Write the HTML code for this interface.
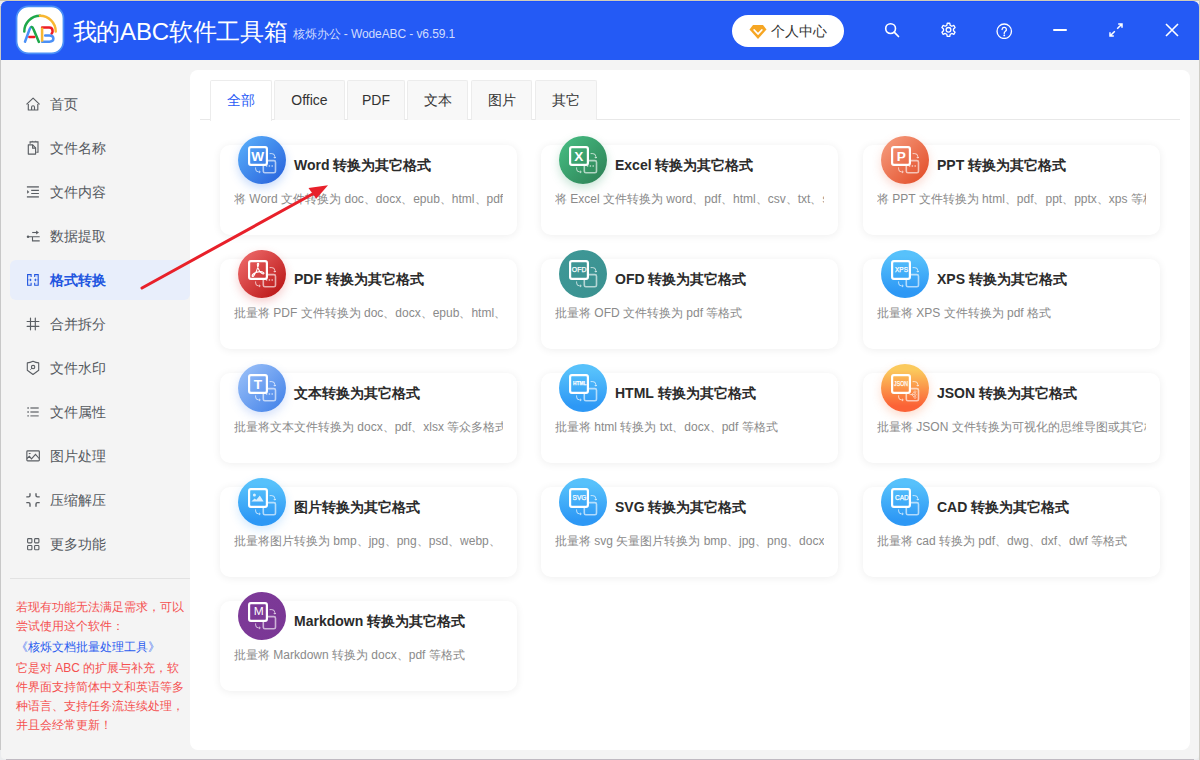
<!DOCTYPE html>
<html><head><meta charset="utf-8"><style>*{box-sizing:border-box;margin:0;padding:0}
html,body{width:1200px;height:760px;overflow:hidden;background:#ebecee;font-family:"Liberation Sans",sans-serif;position:relative}
#win{position:absolute;left:1px;top:1px;width:1198px;height:758px;background:#f4f4f4;border-radius:6px 6px 4px 4px}
#lcol{position:absolute;left:0;top:6px;width:1px;height:744px;background:#c8c8c8}
#rcol{position:absolute;left:1199px;top:0;width:1px;height:760px;background:#cfcdc6}
#brow{position:absolute;left:6px;top:759px;width:1188px;height:1px;background:#c0bac2}
#bar{position:absolute;left:1px;top:1px;width:1198px;height:59px;background:#245af5;border-top:1px solid #1a50ff;border-radius:6px 6px 0 0}
#logo{position:absolute;left:14px;top:4px}
#title{position:absolute;left:72.5px;top:16px;letter-spacing:-0.2px;font-size:24px;color:#fff;line-height:32px;white-space:nowrap}
#sub{position:absolute;left:293px;top:26px;letter-spacing:-0.1px;font-size:12px;color:#d0dcfd;line-height:16px;white-space:nowrap}
#user{position:absolute;left:732px;top:15px;width:112px;height:32px;border-radius:16px;background:#fff;font-size:14px;color:#333;line-height:33px;padding-left:39px}
.tb{position:absolute}
.mi{position:absolute;left:10px;width:180px;height:40px;font-size:14px;color:#55595f;line-height:40px;padding-left:40px;border-radius:6px;white-space:nowrap}
.mi svg{position:absolute;left:15px;top:12px;width:16px;height:16px;color:#5a5e63}
.mi.act{background:#e8eefb;color:#2256e0;font-weight:bold}
.mi.act svg{color:#2256e0}
#sep{position:absolute;left:10px;top:578px;width:180px;height:1px;background:#e2e2e2}
#note{position:absolute;left:16px;top:598px;width:172px;font-size:12px;line-height:18.75px;color:#f45050}
#note .lk{display:block;line-height:23.75px;color:#2a5cf0}
#main{position:absolute;left:190px;top:70px;width:1000px;height:680px;background:#fff;border-radius:8px}
#tabline{position:absolute;left:200px;top:119px;width:980px;height:1px;background:#e8e8e8}
.tab{position:absolute;top:80px;height:40px;border:1px solid #ececec;border-bottom:none;background:#f8f8f8;font-size:14px;color:#333;line-height:38px;text-align:center;border-radius:2px 2px 0 0}
.tab.act{background:#fff;color:#2a5bf6;height:41px}
.card{position:absolute;width:297px;height:90px;background:#fff;border-radius:10px;box-shadow:0 1px 8px rgba(0,0,0,0.07)}
.icw{position:absolute;left:18px;top:-9px;width:48px;height:48px;border-radius:50%}
.ic{position:absolute;left:18px;top:-9px;width:48px;height:48px}
.ct{position:absolute;left:74px;top:10px;font-size:14px;font-weight:bold;color:#2b2b2b;white-space:nowrap;line-height:20px}
.cd{position:absolute;left:14px;top:44.5px;width:269px;font-size:12px;color:#8a8a8a;white-space:nowrap;overflow:hidden;line-height:18px}
#edge{position:absolute;left:0;top:0;width:1200px;height:1px;background:#d0ccb8}
</style></head><body>
<div id="edge"></div><div id="lcol"></div><div id="rcol"></div><div id="brow"></div><div id="win"></div>
<div id="bar"></div>
<svg id="logo" width="52" height="52" viewBox="0 0 52 52">
<rect x="2.55" y="2.35" width="46.9" height="47" rx="12" fill="#fff" stroke="#4a90f8" stroke-width="1.7"/>
<path d="M10.3 27.4A15.7 15.7 0 0 1 26 11.7" fill="none" stroke="#1ea84a" stroke-width="2.5" stroke-linecap="round"/>
<path d="M26 11.7A15.7 15.7 0 0 1 41.7 27.4" fill="none" stroke="#f8b731" stroke-width="2.5" stroke-linecap="round"/>
<path d="M11 37.7L15.6 25.2Q16.5 23 17.6 23" fill="none" stroke="#4a8ff6" stroke-width="2.5" stroke-linecap="round"/>
<path d="M17.6 23Q18.7 23 19.5 25.2L24.9 37.9" fill="none" stroke="#1ea84a" stroke-width="2.5" stroke-linecap="round"/>
<path d="M15.4 32.9H20.2" stroke="#ee1c24" stroke-width="2.5" stroke-linecap="round"/>
<path d="M28.1 23.6H35.2Q38.6 23.6 38.6 27.2Q38.6 28.6 37.6 29.6" fill="none" stroke="#ee1c24" stroke-width="2.5" stroke-linecap="round"/>
<path d="M31.2 31.5H35.4Q39.4 31.5 39.4 34.6Q39.4 37.7 35.4 37.7H28.1" fill="none" stroke="#4a8ff6" stroke-width="2.5" stroke-linecap="round"/>
<path d="M28.1 23.6V37.7" stroke="#f8b731" stroke-width="2.5"/>
</svg>
<div id="title">我的ABC软件工具箱</div>
<div id="sub">核烁办公 - WodeABC - v6.59.1</div>
<div id="user"><svg viewBox="0 0 18 16" width="18" height="16" style="position:absolute;left:17px;top:9px"><path d="M4 1h10l3.5 4.5L9 15 .5 5.5z" fill="#f6a623"/><path d="M5.2 6l3.8 4 3.8-4" fill="none" stroke="#fff" stroke-width="1.8" stroke-linecap="round" stroke-linejoin="round"/></svg>个人中心</div>
<svg class="tb" style="left:884px;top:22px" viewBox="0 0 16 16" width="16" height="16"><circle cx="6.6" cy="6.6" r="4.9" fill="none" stroke="#fff" stroke-width="1.6"/><path d="M10.2 10.2l4.3 4.3" stroke="#fff" stroke-width="1.7" stroke-linecap="round"/></svg>
<svg class="tb" style="left:939.5px;top:22px" viewBox="0 0 16 16" width="17" height="17"><path d="M6.8 1.2h2.4l.4 2 1.5.8 1.9-.8 1.2 2-1.5 1.4v1.6l1.5 1.4-1.2 2-1.9-.8-1.5.8-.4 2H6.8l-.4-2-1.5-.8-1.9.8-1.2-2 1.5-1.4V6.6L1.8 5.2l1.2-2 1.9.8 1.5-.8z" fill="none" stroke="#fff" stroke-width="1.25" stroke-linejoin="round"/><circle cx="8" cy="7.4" r="2.2" fill="none" stroke="#fff" stroke-width="1.25"/></svg>
<svg class="tb" style="left:996px;top:22.5px" viewBox="0 0 16 16" width="16.5" height="16.5"><circle cx="8" cy="8" r="7" fill="none" stroke="#fff" stroke-width="1.3"/><path d="M5.9 6.3a2.1 2.1 0 1 1 3 1.9c-.6.4-.9.8-.9 1.4v.6" fill="none" stroke="#fff" stroke-width="1.25" stroke-linecap="round"/><circle cx="8" cy="12" r="0.9" fill="#fff"/></svg>
<div style="position:absolute;left:1053px;top:29px;width:14px;height:2px;background:#fff;border-radius:1px"></div>
<svg class="tb" style="left:1108px;top:22px" viewBox="0 0 16 16" width="16" height="16"><path d="M9.2 6.8l4.8-4.8M10.2 2h3.8v3.8M6.8 9.2L2 14M2 10.2V14h3.8" fill="none" stroke="#fff" stroke-width="1.5"/></svg>
<svg class="tb" style="left:1164px;top:22px" viewBox="0 0 16 16" width="16" height="16"><path d="M2 2l12 12M14 2L2 14" stroke="#fff" stroke-width="1.6"/></svg>
<div class="mi" style="top:84px"><svg viewBox="0 0 16 16"><path d="M1.5 8.4L8.1 2.1L14.6 8.4M3.3 8.1V14H12.8V8.1M6.6 14V11.2a1.45 1.45 0 0 1 2.9 0V14" fill="none" stroke="currentColor" stroke-width="1.15" stroke-linejoin="round"/></svg>首页</div><div class="mi" style="top:128px"><svg viewBox="0 0 16 16"><path d="M5.1 3.8V1.9H13V12.2H11.3" fill="none" stroke="currentColor" stroke-width="1.1"/><path d="M6.5 1.9l.8-.6.8.6M9.8 1.9l.8-.6.8.6" fill="none" stroke="currentColor" stroke-width="0.8"/><path d="M3.3 4.8H7.7L10.6 7.8V14.1H3.3Z" fill="none" stroke="currentColor" stroke-width="1.15" stroke-linejoin="round"/><path d="M7.6 4.8V8.1H10.6" fill="none" stroke="currentColor" stroke-width="1.1"/></svg>文件名称</div><div class="mi" style="top:172px"><svg viewBox="0 0 16 16"><path d="M1.9 2.9H13.9M1.9 12.9H13.9" stroke="currentColor" stroke-opacity="0.75" stroke-width="1.6"/><path d="M6.2 6.35H13.9M6.2 9.5H13.9" stroke="currentColor" stroke-width="1.1"/><path d="M2.1 6L4.3 7.9 2.1 9.8Z" fill="currentColor"/></svg>文件内容</div><div class="mi" style="top:216px"><svg viewBox="0 0 16 16"><path d="M7.2 4.5H12" stroke="currentColor" stroke-width="1.1"/><path d="M11.1 2.6L14 4.5 11.1 6.5Z" fill="currentColor"/><circle cx="3" cy="8.8" r="1.25" fill="currentColor"/><path d="M3 8.8H14.7M7.5 8.8V12.9H14.7" fill="none" stroke="currentColor" stroke-width="1.1"/></svg>数据提取</div><div class="mi act" style="top:260px"><svg viewBox="0 0 16 16"><path d="M6.1 4.9V2.6H2.6V13.2H6.1V10.8M9.7 4.9V2.6H13.2V13.2H9.7V10.8" fill="none" stroke="currentColor" stroke-width="1.1"/><path d="M2.6 7.9H5M13.2 7.9H10.8" stroke="currentColor" stroke-opacity="0.5" stroke-width="0.9"/><path d="M4.9 6.2L6.7 7.9 4.9 9.5ZM10.9 6.2L9.1 7.9 10.9 9.5Z" fill="currentColor"/><path d="M3.6 4.5h.8M3.6 11.3h.8M11.4 4.5h.8M11.4 11.3h.8" stroke="currentColor" stroke-opacity="0.35" stroke-width="0.8"/></svg>格式转换</div><div class="mi" style="top:304px"><svg viewBox="0 0 16 16"><path d="M5.5 2.1V13.8M10.3 2.1V13.8M2.1 5.5H13.9M2.1 10.3H13.9" stroke="currentColor" stroke-width="1.15" stroke-linecap="round"/></svg>合并拆分</div><div class="mi" style="top:348px"><svg viewBox="0 0 16 16"><path d="M2.3 2.9Q5 2.8 8 1.3Q11 2.8 13.7 2.9V10.3L8 14.5 2.3 10.3Z" fill="none" stroke="currentColor" stroke-width="1.1" stroke-linejoin="round"/><circle cx="8.1" cy="7.1" r="1.7" fill="none" stroke="currentColor" stroke-width="1.1"/><path d="M6.9 8.3L5.4 9.6" stroke="currentColor" stroke-width="1"/></svg>文件水印</div><div class="mi" style="top:392px"><svg viewBox="0 0 16 16"><path d="M2.4 4.05H3.8M2.4 8H3.8M2.4 11.9H3.8" stroke="currentColor" stroke-width="1.4"/><path d="M5.4 4.05H13.7M5.4 8H13.7M5.4 11.9H13.7" stroke="currentColor" stroke-opacity="0.8" stroke-width="1.4"/></svg>文件属性</div><div class="mi" style="top:436px"><svg viewBox="0 0 16 16"><rect x="1.85" y="2.8" width="12.5" height="10.1" rx="0.9" fill="none" stroke="currentColor" stroke-width="1.15"/><path d="M1.9 10.5L4.4 8.3 6.5 10.8 10.5 6.4 14.1 10.5" fill="none" stroke="currentColor" stroke-width="1.1"/><path d="M3.6 5.1a1.1 1.1 0 0 0 2.2 0z" fill="currentColor"/></svg>图片处理</div><div class="mi" style="top:480px"><svg viewBox="0 0 16 16"><path d="M5 1.3V3.5Q5 4.9 3.6 4.9H1.3M11 1.3V3.5Q11 4.9 12.4 4.9H14.7M1.3 10.6H3.6Q5 10.6 5 12V14.7M14.7 10.6H12.4Q11 10.6 11 12V14.7" fill="none" stroke="currentColor" stroke-width="1.4"/></svg>压缩解压</div><div class="mi" style="top:524px"><svg viewBox="0 0 16 16"><rect x="2.6" y="2.6" width="4.3" height="4.3" rx="0.8" fill="none" stroke="currentColor" stroke-width="1.1"/><rect x="9.6" y="2.6" width="4.3" height="4.3" rx="0.8" fill="none" stroke="currentColor" stroke-width="1.1"/><rect x="2.6" y="9.5" width="4.3" height="4.3" rx="0.8" fill="none" stroke="currentColor" stroke-width="1.1"/><rect x="9.6" y="9.5" width="4.3" height="4.3" rx="0.8" fill="none" stroke="currentColor" stroke-width="1.1"/></svg>更多功能</div>
<div id="sep"></div>
<div id="note">若现有功能无法满足需求，可以尝试使用这个软件：<span class="lk">《核烁文档批量处理工具》</span>它是对 ABC 的扩展与补充，软件界面支持简体中文和英语等多种语言、支持任务流连续处理，并且会经常更新！</div>
<div id="main"></div>
<div id="tabline"></div>
<div class="tab act" style="left:210px;width:62px">全部</div><div class="tab" style="left:274px;width:71px">Office</div><div class="tab" style="left:347px;width:58px">PDF</div><div class="tab" style="left:407px;width:61px">文本</div><div class="tab" style="left:471px;width:61px">图片</div><div class="tab" style="left:535px;width:62px">其它</div>
<div class="card" style="left:220px;top:145px"><div class="icw" style="box-shadow:0 4px 10px rgba(60,130,240,0.28)"></div><svg class="ic" viewBox="0 0 48 48" width="48" height="48"><defs><linearGradient id="g_word" gradientUnits="userSpaceOnUse" x1="6" y1="6" x2="42" y2="42"><stop offset="0" stop-color="#55a8f8"/><stop offset="1" stop-color="#2c68de"/></linearGradient></defs><circle cx="24" cy="24" r="24" fill="url(#g_word)"/><rect x="25.3" y="24.6" width="12.2" height="12.2" rx="1.6" fill="none" stroke="rgba(255,255,255,0.62)" stroke-width="1.6"/><rect x="27.900000000000002" y="29.3" width="1.4" height="1.4" fill="rgba(255,255,255,0.7)"/><rect x="30.7" y="29.3" width="1.4" height="1.4" fill="rgba(255,255,255,0.7)"/><rect x="33.5" y="29.3" width="1.4" height="1.4" fill="rgba(255,255,255,0.7)"/><path d="M31.6 17.6h2.2a3 3 0 0 1 3 3v1.3" fill="none" stroke="rgba(255,255,255,0.72)" stroke-width="0.95"/><path d="M35.7 21l1.1 1.2 1.1-1.2" fill="none" stroke="rgba(255,255,255,0.72)" stroke-width="0.95"/><path d="M17.6 31.4v1.5a3 3 0 0 0 3 3h1.2" fill="none" stroke="rgba(255,255,255,0.72)" stroke-width="0.95"/><path d="M21.1 34.8l1.2 1.1-1.2 1.1" fill="none" stroke="rgba(255,255,255,0.72)" stroke-width="0.95"/><rect x="11.1" y="11.1" width="17.8" height="17.8" rx="1.8" fill="url(#g_word)" stroke="#fff" stroke-width="2.2"/><text x="19.6" y="24.9" text-anchor="middle" font-size="13.6" font-weight="bold" fill="#fff" font-family="Liberation Sans, sans-serif">W</text></svg><div class="ct">Word 转换为其它格式</div><div class="cd">将 Word 文件转换为 doc、docx、epub、html、pdf、txt 等格式</div></div><div class="card" style="left:541px;top:145px"><div class="icw" style="box-shadow:0 4px 10px rgba(60,160,110,0.28)"></div><svg class="ic" viewBox="0 0 48 48" width="48" height="48"><defs><linearGradient id="g_excel" gradientUnits="userSpaceOnUse" x1="6" y1="6" x2="42" y2="42"><stop offset="0" stop-color="#44b87f"/><stop offset="1" stop-color="#2f8659"/></linearGradient></defs><circle cx="24" cy="24" r="24" fill="url(#g_excel)"/><rect x="25.3" y="24.6" width="12.2" height="12.2" rx="1.6" fill="none" stroke="rgba(255,255,255,0.62)" stroke-width="1.6"/><rect x="27.900000000000002" y="29.3" width="1.4" height="1.4" fill="rgba(255,255,255,0.7)"/><rect x="30.7" y="29.3" width="1.4" height="1.4" fill="rgba(255,255,255,0.7)"/><rect x="33.5" y="29.3" width="1.4" height="1.4" fill="rgba(255,255,255,0.7)"/><path d="M31.6 17.6h2.2a3 3 0 0 1 3 3v1.3" fill="none" stroke="rgba(255,255,255,0.72)" stroke-width="0.95"/><path d="M35.7 21l1.1 1.2 1.1-1.2" fill="none" stroke="rgba(255,255,255,0.72)" stroke-width="0.95"/><path d="M17.6 31.4v1.5a3 3 0 0 0 3 3h1.2" fill="none" stroke="rgba(255,255,255,0.72)" stroke-width="0.95"/><path d="M21.1 34.8l1.2 1.1-1.2 1.1" fill="none" stroke="rgba(255,255,255,0.72)" stroke-width="0.95"/><rect x="11.1" y="11.1" width="17.8" height="17.8" rx="1.8" fill="url(#g_excel)" stroke="#fff" stroke-width="2.2"/><text x="19.7" y="24.9" text-anchor="middle" font-size="13.6" font-weight="bold" fill="#fff" font-family="Liberation Sans, sans-serif">X</text></svg><div class="ct">Excel 转换为其它格式</div><div class="cd">将 Excel 文件转换为 word、pdf、html、csv、txt、svg 等格式</div></div><div class="card" style="left:863px;top:145px"><div class="icw" style="box-shadow:0 4px 10px rgba(240,110,80,0.25)"></div><svg class="ic" viewBox="0 0 48 48" width="48" height="48"><defs><linearGradient id="g_ppt" gradientUnits="userSpaceOnUse" x1="6" y1="6" x2="42" y2="42"><stop offset="0" stop-color="#f49677"/><stop offset="1" stop-color="#e4532f"/></linearGradient></defs><circle cx="24" cy="24" r="24" fill="url(#g_ppt)"/><rect x="25.3" y="24.6" width="12.2" height="12.2" rx="1.6" fill="none" stroke="rgba(255,255,255,0.62)" stroke-width="1.6"/><rect x="27.900000000000002" y="29.3" width="1.4" height="1.4" fill="rgba(255,255,255,0.7)"/><rect x="30.7" y="29.3" width="1.4" height="1.4" fill="rgba(255,255,255,0.7)"/><rect x="33.5" y="29.3" width="1.4" height="1.4" fill="rgba(255,255,255,0.7)"/><path d="M31.6 17.6h2.2a3 3 0 0 1 3 3v1.3" fill="none" stroke="rgba(255,255,255,0.72)" stroke-width="0.95"/><path d="M35.7 21l1.1 1.2 1.1-1.2" fill="none" stroke="rgba(255,255,255,0.72)" stroke-width="0.95"/><path d="M17.6 31.4v1.5a3 3 0 0 0 3 3h1.2" fill="none" stroke="rgba(255,255,255,0.72)" stroke-width="0.95"/><path d="M21.1 34.8l1.2 1.1-1.2 1.1" fill="none" stroke="rgba(255,255,255,0.72)" stroke-width="0.95"/><rect x="11.1" y="11.1" width="17.8" height="17.8" rx="1.8" fill="url(#g_ppt)" stroke="#fff" stroke-width="2.2"/><text x="20.2" y="24.9" text-anchor="middle" font-size="13.6" font-weight="bold" fill="#fff" font-family="Liberation Sans, sans-serif">P</text></svg><div class="ct">PPT 转换为其它格式</div><div class="cd">将 PPT 文件转换为 html、pdf、ppt、pptx、xps 等格式</div></div><div class="card" style="left:220px;top:259px"><div class="icw" style="box-shadow:0 4px 10px rgba(220,60,60,0.25)"></div><svg class="ic" viewBox="0 0 48 48" width="48" height="48"><defs><linearGradient id="g_pdf" gradientUnits="userSpaceOnUse" x1="6" y1="6" x2="42" y2="42"><stop offset="0" stop-color="#ea6464"/><stop offset="1" stop-color="#bd1a1a"/></linearGradient></defs><circle cx="24" cy="24" r="24" fill="url(#g_pdf)"/><rect x="25.3" y="24.6" width="12.2" height="12.2" rx="1.6" fill="none" stroke="rgba(255,255,255,0.62)" stroke-width="1.6"/><rect x="27.900000000000002" y="29.3" width="1.4" height="1.4" fill="rgba(255,255,255,0.7)"/><rect x="30.7" y="29.3" width="1.4" height="1.4" fill="rgba(255,255,255,0.7)"/><rect x="33.5" y="29.3" width="1.4" height="1.4" fill="rgba(255,255,255,0.7)"/><path d="M31.6 17.6h2.2a3 3 0 0 1 3 3v1.3" fill="none" stroke="rgba(255,255,255,0.72)" stroke-width="0.95"/><path d="M35.7 21l1.1 1.2 1.1-1.2" fill="none" stroke="rgba(255,255,255,0.72)" stroke-width="0.95"/><path d="M17.6 31.4v1.5a3 3 0 0 0 3 3h1.2" fill="none" stroke="rgba(255,255,255,0.72)" stroke-width="0.95"/><path d="M21.1 34.8l1.2 1.1-1.2 1.1" fill="none" stroke="rgba(255,255,255,0.72)" stroke-width="0.95"/><rect x="11.1" y="11.1" width="17.8" height="17.8" rx="1.8" fill="url(#g_pdf)" stroke="#fff" stroke-width="2.2"/><path d="M20 13.3c-1 0-.8 2.8.4 5.6 1 2.4 2.6 4.6 4.6 5 .9.2 1.3-.7.6-1.3-1.3-1-4.8-1.1-7.7 0-2.2.8-3.8 2.4-3.8 3.3 0 .7.9.8 1.6-.1 1.5-1.9 3.6-6.5 4.5-9.7.6-2.1.8-2.8-.2-2.8z" fill="none" stroke="#fff" stroke-width="1.1"/></svg><div class="ct">PDF 转换为其它格式</div><div class="cd">批量将 PDF 文件转换为 doc、docx、epub、html、txt 等格式</div></div><div class="card" style="left:541px;top:259px"><div class="icw" style="box-shadow:0 4px 10px rgba(60,150,150,0.0)"></div><svg class="ic" viewBox="0 0 48 48" width="48" height="48"><defs><linearGradient id="g_ofd" gradientUnits="userSpaceOnUse" x1="6" y1="6" x2="42" y2="42"><stop offset="0" stop-color="#3e9796"/><stop offset="1" stop-color="#3b9291"/></linearGradient></defs><circle cx="24" cy="24" r="24" fill="url(#g_ofd)"/><rect x="25.3" y="24.6" width="12.2" height="12.2" rx="1.6" fill="none" stroke="rgba(255,255,255,0.62)" stroke-width="1.6"/><path d="M31.6 17.6h2.2a3 3 0 0 1 3 3v1.3" fill="none" stroke="rgba(255,255,255,0.72)" stroke-width="0.95"/><path d="M35.7 21l1.1 1.2 1.1-1.2" fill="none" stroke="rgba(255,255,255,0.72)" stroke-width="0.95"/><path d="M17.6 31.4v1.5a3 3 0 0 0 3 3h1.2" fill="none" stroke="rgba(255,255,255,0.72)" stroke-width="0.95"/><path d="M21.1 34.8l1.2 1.1-1.2 1.1" fill="none" stroke="rgba(255,255,255,0.72)" stroke-width="0.95"/><rect x="11.1" y="11.1" width="17.8" height="17.8" rx="1.8" fill="url(#g_ofd)" stroke="#fff" stroke-width="2.2"/><text x="20.1" y="21.9" text-anchor="middle" font-size="7" font-weight="normal" fill="#fff" stroke="#fff" stroke-width="0.25" textLength="14.6" lengthAdjust="spacingAndGlyphs" font-family="Liberation Sans, sans-serif">OFD</text></svg><div class="ct">OFD 转换为其它格式</div><div class="cd">批量将 OFD 文件转换为 pdf 等格式</div></div><div class="card" style="left:863px;top:259px"><div class="icw" style="box-shadow:0 4px 10px rgba(60,160,250,0.0)"></div><svg class="ic" viewBox="0 0 48 48" width="48" height="48"><defs><linearGradient id="g_xps" gradientUnits="userSpaceOnUse" x1="0" y1="6" x2="0" y2="42"><stop offset="0" stop-color="#57c1fb"/><stop offset="1" stop-color="#2d98f5"/></linearGradient></defs><circle cx="24" cy="24" r="24" fill="url(#g_xps)"/><rect x="25.3" y="24.6" width="12.2" height="12.2" rx="1.6" fill="none" stroke="rgba(255,255,255,0.62)" stroke-width="1.6"/><path d="M31.6 17.6h2.2a3 3 0 0 1 3 3v1.3" fill="none" stroke="rgba(255,255,255,0.72)" stroke-width="0.95"/><path d="M35.7 21l1.1 1.2 1.1-1.2" fill="none" stroke="rgba(255,255,255,0.72)" stroke-width="0.95"/><path d="M17.6 31.4v1.5a3 3 0 0 0 3 3h1.2" fill="none" stroke="rgba(255,255,255,0.72)" stroke-width="0.95"/><path d="M21.1 34.8l1.2 1.1-1.2 1.1" fill="none" stroke="rgba(255,255,255,0.72)" stroke-width="0.95"/><rect x="11.1" y="11.1" width="17.8" height="17.8" rx="1.8" fill="url(#g_xps)" stroke="#fff" stroke-width="2.2"/><text x="20.5" y="21.9" text-anchor="middle" font-size="7" font-weight="normal" fill="#fff" stroke="#fff" stroke-width="0.25" textLength="12.9" lengthAdjust="spacingAndGlyphs" font-family="Liberation Sans, sans-serif">XPS</text></svg><div class="ct">XPS 转换为其它格式</div><div class="cd">批量将 XPS 文件转换为 pdf 格式</div></div><div class="card" style="left:220px;top:373px"><div class="icw" style="box-shadow:0 4px 10px rgba(90,140,240,0.25)"></div><svg class="ic" viewBox="0 0 48 48" width="48" height="48"><defs><linearGradient id="g_text" gradientUnits="userSpaceOnUse" x1="6" y1="6" x2="42" y2="42"><stop offset="0" stop-color="#93bbf7"/><stop offset="1" stop-color="#4a87ea"/></linearGradient></defs><circle cx="24" cy="24" r="24" fill="url(#g_text)"/><rect x="25.3" y="24.6" width="12.2" height="12.2" rx="1.6" fill="none" stroke="rgba(255,255,255,0.62)" stroke-width="1.6"/><rect x="27.900000000000002" y="29.3" width="1.4" height="1.4" fill="rgba(255,255,255,0.7)"/><rect x="30.7" y="29.3" width="1.4" height="1.4" fill="rgba(255,255,255,0.7)"/><rect x="33.5" y="29.3" width="1.4" height="1.4" fill="rgba(255,255,255,0.7)"/><path d="M31.6 17.6h2.2a3 3 0 0 1 3 3v1.3" fill="none" stroke="rgba(255,255,255,0.72)" stroke-width="0.95"/><path d="M35.7 21l1.1 1.2 1.1-1.2" fill="none" stroke="rgba(255,255,255,0.72)" stroke-width="0.95"/><path d="M17.6 31.4v1.5a3 3 0 0 0 3 3h1.2" fill="none" stroke="rgba(255,255,255,0.72)" stroke-width="0.95"/><path d="M21.1 34.8l1.2 1.1-1.2 1.1" fill="none" stroke="rgba(255,255,255,0.72)" stroke-width="0.95"/><rect x="11.1" y="11.1" width="17.8" height="17.8" rx="1.8" fill="url(#g_text)" stroke="#fff" stroke-width="2.2"/><text x="20.0" y="24.9" text-anchor="middle" font-size="13.6" font-weight="bold" fill="#fff" font-family="Liberation Sans, sans-serif">T</text></svg><div class="ct">文本转换为其它格式</div><div class="cd">批量将文本文件转换为 docx、pdf、xlsx 等众多格式</div></div><div class="card" style="left:541px;top:373px"><div class="icw" style="box-shadow:0 4px 10px rgba(60,160,250,0.0)"></div><svg class="ic" viewBox="0 0 48 48" width="48" height="48"><defs><linearGradient id="g_html" gradientUnits="userSpaceOnUse" x1="0" y1="6" x2="0" y2="42"><stop offset="0" stop-color="#57c1fb"/><stop offset="1" stop-color="#2d98f5"/></linearGradient></defs><circle cx="24" cy="24" r="24" fill="url(#g_html)"/><rect x="25.3" y="24.6" width="12.2" height="12.2" rx="1.6" fill="none" stroke="rgba(255,255,255,0.62)" stroke-width="1.6"/><path d="M31.6 17.6h2.2a3 3 0 0 1 3 3v1.3" fill="none" stroke="rgba(255,255,255,0.72)" stroke-width="0.95"/><path d="M35.7 21l1.1 1.2 1.1-1.2" fill="none" stroke="rgba(255,255,255,0.72)" stroke-width="0.95"/><path d="M17.6 31.4v1.5a3 3 0 0 0 3 3h1.2" fill="none" stroke="rgba(255,255,255,0.72)" stroke-width="0.95"/><path d="M21.1 34.8l1.2 1.1-1.2 1.1" fill="none" stroke="rgba(255,255,255,0.72)" stroke-width="0.95"/><rect x="11.1" y="11.1" width="17.8" height="17.8" rx="1.8" fill="url(#g_html)" stroke="#fff" stroke-width="2.2"/><text x="20.75" y="20.5" text-anchor="middle" font-size="5.4" font-weight="bold" fill="#fff" stroke="#fff" stroke-width="0.25" textLength="13.3" lengthAdjust="spacingAndGlyphs" font-family="Liberation Sans, sans-serif">HTML</text></svg><div class="ct">HTML 转换为其它格式</div><div class="cd">批量将 html 转换为 txt、docx、pdf 等格式</div></div><div class="card" style="left:863px;top:373px"><div class="icw" style="box-shadow:0 4px 10px rgba(250,120,60,0.25)"></div><svg class="ic" viewBox="0 0 48 48" width="48" height="48"><defs><linearGradient id="g_json" gradientUnits="userSpaceOnUse" x1="0" y1="6" x2="0" y2="42"><stop offset="0" stop-color="#fbc95c"/><stop offset="1" stop-color="#fb6236"/></linearGradient></defs><circle cx="24" cy="24" r="24" fill="url(#g_json)"/><rect x="25.3" y="24.6" width="12.2" height="12.2" rx="1.6" fill="none" stroke="rgba(255,255,255,0.62)" stroke-width="1.6"/><path d="M28.5 30.6h2.2M30.7 30.6l2.2-2.4M30.7 30.6l2.2 2.4M30.7 30.6h2.6" stroke="rgba(255,255,255,0.6)" stroke-width="0.9" fill="none"/><circle cx="34" cy="27.8" r="1" fill="none" stroke="rgba(255,255,255,0.6)" stroke-width="0.8"/><circle cx="34.2" cy="30.6" r="1" fill="none" stroke="rgba(255,255,255,0.6)" stroke-width="0.8"/><circle cx="34" cy="33.4" r="1" fill="none" stroke="rgba(255,255,255,0.6)" stroke-width="0.8"/><path d="M31.6 17.6h2.2a3 3 0 0 1 3 3v1.3" fill="none" stroke="rgba(255,255,255,0.72)" stroke-width="0.95"/><path d="M35.7 21l1.1 1.2 1.1-1.2" fill="none" stroke="rgba(255,255,255,0.72)" stroke-width="0.95"/><path d="M17.6 31.4v1.5a3 3 0 0 0 3 3h1.2" fill="none" stroke="rgba(255,255,255,0.72)" stroke-width="0.95"/><path d="M21.1 34.8l1.2 1.1-1.2 1.1" fill="none" stroke="rgba(255,255,255,0.72)" stroke-width="0.95"/><rect x="11.1" y="11.1" width="17.8" height="17.8" rx="1.8" fill="url(#g_json)" stroke="#fff" stroke-width="2.2"/><text x="20.0" y="21.9" text-anchor="middle" font-size="7.2" font-weight="normal" fill="#fff" stroke="#fff" stroke-width="0.25" textLength="13.8" lengthAdjust="spacingAndGlyphs" font-family="Liberation Sans, sans-serif">JSON</text></svg><div class="ct">JSON 转换为其它格式</div><div class="cd">批量将 JSON 文件转换为可视化的思维导图或其它格式</div></div><div class="card" style="left:220px;top:487px"><div class="icw" style="box-shadow:0 4px 10px rgba(60,160,250,0.22)"></div><svg class="ic" viewBox="0 0 48 48" width="48" height="48"><defs><linearGradient id="g_img" gradientUnits="userSpaceOnUse" x1="0" y1="6" x2="0" y2="42"><stop offset="0" stop-color="#57c1fb"/><stop offset="1" stop-color="#2d98f5"/></linearGradient></defs><circle cx="24" cy="24" r="24" fill="url(#g_img)"/><rect x="25.3" y="24.6" width="12.2" height="12.2" rx="1.6" fill="none" stroke="rgba(255,255,255,0.62)" stroke-width="1.6"/><path d="M31.6 17.6h2.2a3 3 0 0 1 3 3v1.3" fill="none" stroke="rgba(255,255,255,0.72)" stroke-width="0.95"/><path d="M35.7 21l1.1 1.2 1.1-1.2" fill="none" stroke="rgba(255,255,255,0.72)" stroke-width="0.95"/><path d="M17.6 31.4v1.5a3 3 0 0 0 3 3h1.2" fill="none" stroke="rgba(255,255,255,0.72)" stroke-width="0.95"/><path d="M21.1 34.8l1.2 1.1-1.2 1.1" fill="none" stroke="rgba(255,255,255,0.72)" stroke-width="0.95"/><rect x="11.1" y="11.1" width="17.8" height="17.8" rx="1.8" fill="url(#g_img)" stroke="#fff" stroke-width="2.2"/><circle cx="16.4" cy="17" r="1.5" fill="rgba(255,255,255,0.8)"/><path d="M13.4 23.4l3.2-3 1.8 1.4 3.4-4.4 3.8 6z" fill="rgba(255,255,255,0.8)"/></svg><div class="ct">图片转换为其它格式</div><div class="cd">批量将图片转换为 bmp、jpg、png、psd、webp、</div></div><div class="card" style="left:541px;top:487px"><div class="icw" style="box-shadow:0 4px 10px rgba(60,160,250,0.0)"></div><svg class="ic" viewBox="0 0 48 48" width="48" height="48"><defs><linearGradient id="g_svg" gradientUnits="userSpaceOnUse" x1="0" y1="6" x2="0" y2="42"><stop offset="0" stop-color="#57c1fb"/><stop offset="1" stop-color="#2d98f5"/></linearGradient></defs><circle cx="24" cy="24" r="24" fill="url(#g_svg)"/><rect x="25.3" y="24.6" width="12.2" height="12.2" rx="1.6" fill="none" stroke="rgba(255,255,255,0.62)" stroke-width="1.6"/><path d="M31.6 17.6h2.2a3 3 0 0 1 3 3v1.3" fill="none" stroke="rgba(255,255,255,0.72)" stroke-width="0.95"/><path d="M35.7 21l1.1 1.2 1.1-1.2" fill="none" stroke="rgba(255,255,255,0.72)" stroke-width="0.95"/><path d="M17.6 31.4v1.5a3 3 0 0 0 3 3h1.2" fill="none" stroke="rgba(255,255,255,0.72)" stroke-width="0.95"/><path d="M21.1 34.8l1.2 1.1-1.2 1.1" fill="none" stroke="rgba(255,255,255,0.72)" stroke-width="0.95"/><rect x="11.1" y="11.1" width="17.8" height="17.8" rx="1.8" fill="url(#g_svg)" stroke="#fff" stroke-width="2.2"/><text x="20.5" y="21.9" text-anchor="middle" font-size="7" font-weight="normal" fill="#fff" stroke="#fff" stroke-width="0.25" textLength="13.8" lengthAdjust="spacingAndGlyphs" font-family="Liberation Sans, sans-serif">SVG</text></svg><div class="ct">SVG 转换为其它格式</div><div class="cd">批量将 svg 矢量图片转换为 bmp、jpg、png、docx 等格式</div></div><div class="card" style="left:863px;top:487px"><div class="icw" style="box-shadow:0 4px 10px rgba(60,160,250,0.0)"></div><svg class="ic" viewBox="0 0 48 48" width="48" height="48"><defs><linearGradient id="g_cad" gradientUnits="userSpaceOnUse" x1="0" y1="6" x2="0" y2="42"><stop offset="0" stop-color="#57c1fb"/><stop offset="1" stop-color="#2d98f5"/></linearGradient></defs><circle cx="24" cy="24" r="24" fill="url(#g_cad)"/><rect x="25.3" y="24.6" width="12.2" height="12.2" rx="1.6" fill="none" stroke="rgba(255,255,255,0.62)" stroke-width="1.6"/><path d="M31.6 17.6h2.2a3 3 0 0 1 3 3v1.3" fill="none" stroke="rgba(255,255,255,0.72)" stroke-width="0.95"/><path d="M35.7 21l1.1 1.2 1.1-1.2" fill="none" stroke="rgba(255,255,255,0.72)" stroke-width="0.95"/><path d="M17.6 31.4v1.5a3 3 0 0 0 3 3h1.2" fill="none" stroke="rgba(255,255,255,0.72)" stroke-width="0.95"/><path d="M21.1 34.8l1.2 1.1-1.2 1.1" fill="none" stroke="rgba(255,255,255,0.72)" stroke-width="0.95"/><rect x="11.1" y="11.1" width="17.8" height="17.8" rx="1.8" fill="url(#g_cad)" stroke="#fff" stroke-width="2.2"/><text x="20.9" y="21.9" text-anchor="middle" font-size="7" font-weight="normal" fill="#fff" stroke="#fff" stroke-width="0.25" textLength="13.8" lengthAdjust="spacingAndGlyphs" font-family="Liberation Sans, sans-serif">CAD</text></svg><div class="ct">CAD 转换为其它格式</div><div class="cd">批量将 cad 转换为 pdf、dwg、dxf、dwf 等格式</div></div><div class="card" style="left:220px;top:601px"><div class="icw" style="box-shadow:0 4px 10px rgba(120,60,150,0.0)"></div><svg class="ic" viewBox="0 0 48 48" width="48" height="48"><defs><linearGradient id="g_md" gradientUnits="userSpaceOnUse" x1="6" y1="6" x2="42" y2="42"><stop offset="0" stop-color="#7d3a98"/><stop offset="1" stop-color="#7a3795"/></linearGradient></defs><circle cx="24" cy="24" r="24" fill="url(#g_md)"/><rect x="25.3" y="24.6" width="12.2" height="12.2" rx="1.6" fill="none" stroke="rgba(255,255,255,0.62)" stroke-width="1.6"/><path d="M31.6 17.6h2.2a3 3 0 0 1 3 3v1.3" fill="none" stroke="rgba(255,255,255,0.72)" stroke-width="0.95"/><path d="M35.7 21l1.1 1.2 1.1-1.2" fill="none" stroke="rgba(255,255,255,0.72)" stroke-width="0.95"/><path d="M17.6 31.4v1.5a3 3 0 0 0 3 3h1.2" fill="none" stroke="rgba(255,255,255,0.72)" stroke-width="0.95"/><path d="M21.1 34.8l1.2 1.1-1.2 1.1" fill="none" stroke="rgba(255,255,255,0.72)" stroke-width="0.95"/><rect x="11.1" y="11.1" width="17.8" height="17.8" rx="1.8" fill="url(#g_md)" stroke="#fff" stroke-width="2.2"/><text x="20.8" y="23.0" text-anchor="middle" font-size="10" font-weight="normal" fill="#fff" stroke="#fff" stroke-width="0" textLength="10.0" lengthAdjust="spacingAndGlyphs" font-family="Liberation Sans, sans-serif">M</text></svg><div class="ct">Markdown 转换为其它格式</div><div class="cd">批量将 Markdown 转换为 docx、pdf 等格式</div></div>
<svg style="position:absolute;left:0;top:0" width="1200" height="760"><path d="M142 288L314 193.2" stroke="#e8202a" stroke-width="3" stroke-linecap="round"/><path d="M328 185.3L308.5 188 316.2 198.8z" fill="#e8202a"/></svg>
</body></html>
